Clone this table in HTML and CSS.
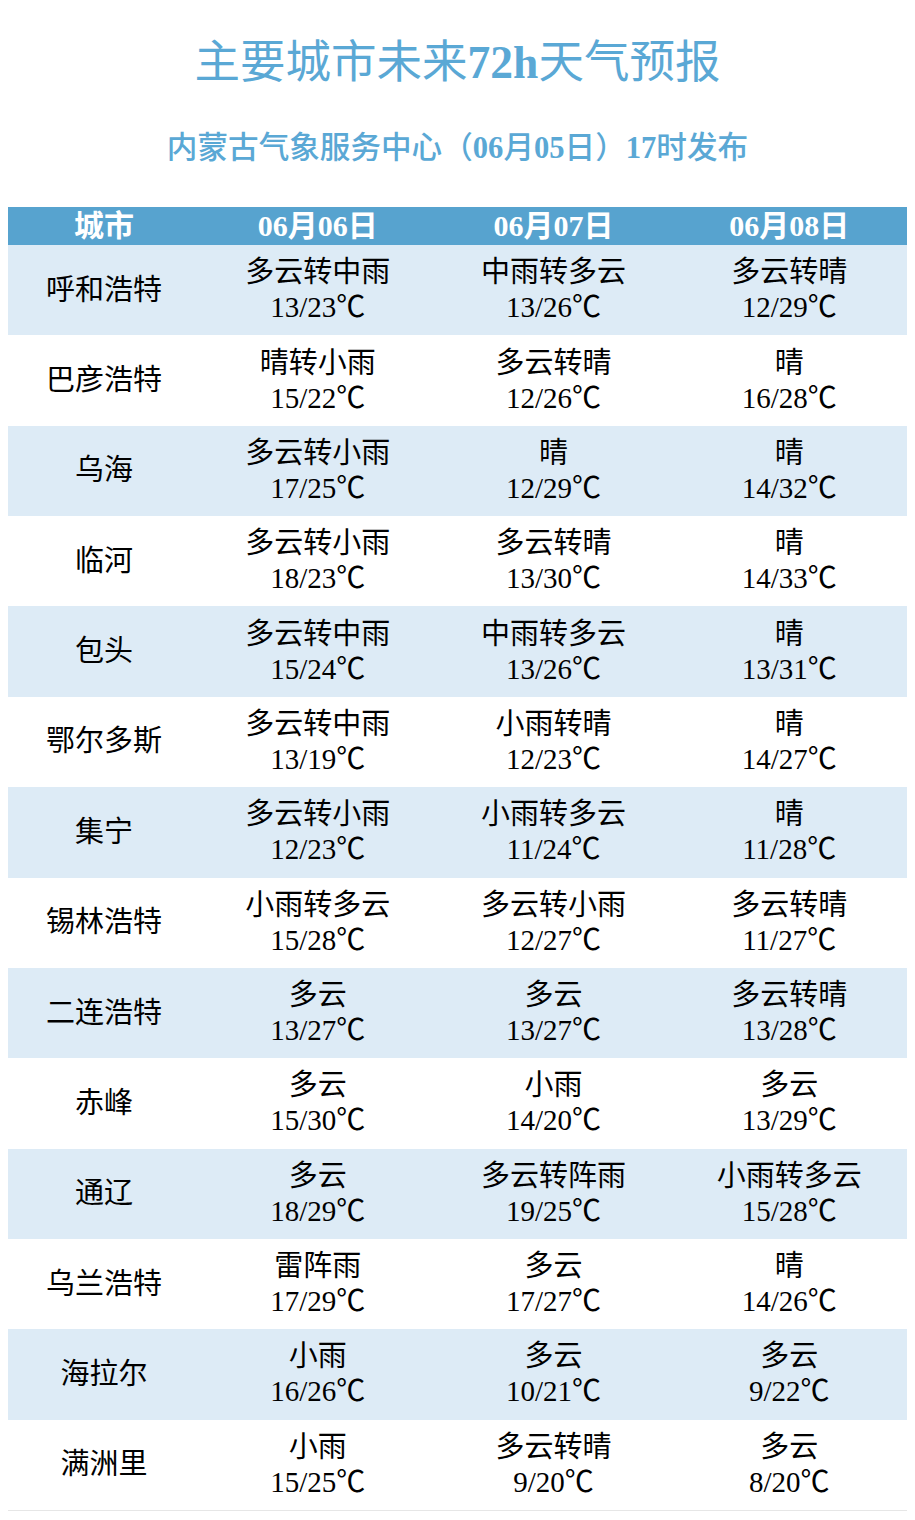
FILE: index.html
```html
<!DOCTYPE html>
<html lang="zh-CN">
<head>
<meta charset="utf-8">
<title>主要城市未来72h天气预报</title>
<link rel="stylesheet" href="styles.css">
</head>
<body>
<div class="page">
  <h1 class="title">主要城市未来<b>72h</b>天气预报</h1>
  <p class="subtitle">内蒙古气象服务中心（<b>06</b>月<b>05</b>日）<b>17</b>时发布</p>
  <table class="forecast">
    <colgroup>
      <col class="c-city"><col class="c-day"><col class="c-day"><col class="c-day">
    </colgroup>
    <thead>
      <tr><th>城市</th><th>06月06日</th><th>06月07日</th><th>06月08日</th></tr>
    </thead>
    <tbody>
      <tr><td>呼和浩特</td><td>多云转中雨<br>13/23℃</td><td>中雨转多云<br>13/26℃</td><td>多云转晴<br>12/29℃</td></tr>
      <tr><td>巴彦浩特</td><td>晴转小雨<br>15/22℃</td><td>多云转晴<br>12/26℃</td><td>晴<br>16/28℃</td></tr>
      <tr><td>乌海</td><td>多云转小雨<br>17/25℃</td><td>晴<br>12/29℃</td><td>晴<br>14/32℃</td></tr>
      <tr><td>临河</td><td>多云转小雨<br>18/23℃</td><td>多云转晴<br>13/30℃</td><td>晴<br>14/33℃</td></tr>
      <tr><td>包头</td><td>多云转中雨<br>15/24℃</td><td>中雨转多云<br>13/26℃</td><td>晴<br>13/31℃</td></tr>
      <tr><td>鄂尔多斯</td><td>多云转中雨<br>13/19℃</td><td>小雨转晴<br>12/23℃</td><td>晴<br>14/27℃</td></tr>
      <tr><td>集宁</td><td>多云转小雨<br>12/23℃</td><td>小雨转多云<br>11/24℃</td><td>晴<br>11/28℃</td></tr>
      <tr><td>锡林浩特</td><td>小雨转多云<br>15/28℃</td><td>多云转小雨<br>12/27℃</td><td>多云转晴<br>11/27℃</td></tr>
      <tr><td>二连浩特</td><td>多云<br>13/27℃</td><td>多云<br>13/27℃</td><td>多云转晴<br>13/28℃</td></tr>
      <tr><td>赤峰</td><td>多云<br>15/30℃</td><td>小雨<br>14/20℃</td><td>多云<br>13/29℃</td></tr>
      <tr><td>通辽</td><td>多云<br>18/29℃</td><td>多云转阵雨<br>19/25℃</td><td>小雨转多云<br>15/28℃</td></tr>
      <tr><td>乌兰浩特</td><td>雷阵雨<br>17/29℃</td><td>多云<br>17/27℃</td><td>晴<br>14/26℃</td></tr>
      <tr><td>海拉尔</td><td>小雨<br>16/26℃</td><td>多云<br>10/21℃</td><td>多云<br>9/22℃</td></tr>
      <tr><td>满洲里</td><td>小雨<br>15/25℃</td><td>多云转晴<br>9/20℃</td><td>多云<br>8/20℃</td></tr>
    </tbody>
  </table>
</div>
</body>
</html>
```
FILE: styles.css
```css
html, body {
  margin: 0;
  padding: 0;
  background: #ffffff;
}
.page {
  padding: 38px 8px 0 8px;
  font-family: "Liberation Serif", "Noto Sans CJK SC", serif;
}
.title {
  margin: 0;
  height: 50px;
  line-height: 50px;
  font-size: 45.5px;
  font-weight: normal;
  text-align: center;
  color: #5aa8d5;
}
.title b {
  font-weight: bold;
}
.subtitle {
  margin: 40px 0 0 0;
  height: 40px;
  line-height: 40px;
  font-size: 30.6px;
  font-weight: 500;
  text-align: center;
  color: #5aa8d5;
}
.subtitle b {
  font-weight: bold;
}
.forecast {
  margin-top: 39px;
  width: 899px;
  border-collapse: collapse;
  table-layout: fixed;
}
.c-city { width: 192px; }
.c-day { width: 235.67px; }
.forecast th {
  height: 38px;
  padding: 0;
  background: #57a3cf;
  color: #ffffff;
  font-size: 30px;
  font-weight: bold;
  line-height: 38px;
  text-align: center;
}
.forecast td {
  height: 90.36px;
  padding: 0;
  font-size: 29px;
  line-height: 35px;
  color: #000000;
  text-align: center;
  vertical-align: middle;
}
.forecast tbody tr:nth-child(odd) td {
  background: #ddebf6;
}
.forecast tbody tr:last-child td {
  border-bottom: 1px solid #e6e6e6;
}
```
